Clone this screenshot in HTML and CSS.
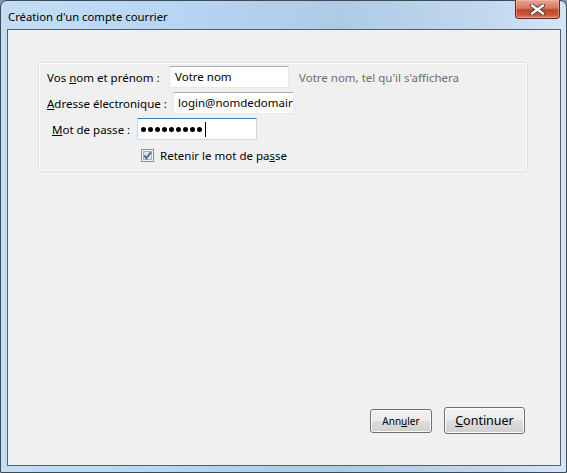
FILE: index.html
```html
<!DOCTYPE html>
<html lang="fr">
<head>
    <meta charset="UTF-8">
    <title>Création d'un compte courrier</title>
    <link rel="stylesheet" href="styles.css">
</head>
<body>
    <div class="window">
        <div class="titlebar">
            <span class="title">Création d'un compte courrier</span>
            <div class="close-btn">
                <svg width="17" height="11" viewBox="0 0 17 11">
                    <path d="M3 1.5 L14 9.5 M14 1.5 L3 9.5" stroke="#4a3a36" stroke-width="4.2" stroke-linecap="round"/>
                    <path d="M3 1.5 L14 9.5 M14 1.5 L3 9.5" stroke="#ffffff" stroke-width="2.4" stroke-linecap="round"/>
                </svg>
            </div>
        </div>

        <div class="client">
            <div class="groupbox">
                <div class="row">
                    <label class="lbl lbl-name">Vos <u>n</u>om et prénom :</label>
                    <div class="field">Votre nom</div>
                    <span class="hint">Votre nom, tel qu'il s'affichera</span>
                </div>
                <div class="row">
                    <label class="lbl lbl-mail"><u>A</u>dresse électronique :</label>
                    <div class="field field-mail">login@nomdedomair</div>
                </div>
                <div class="row">
                    <label class="lbl lbl-pass"><u>M</u>ot de passe :</label>
                    <div class="field field-pass">
                        <span class="dot"></span><span class="dot"></span><span class="dot"></span>
                        <span class="dot"></span><span class="dot"></span><span class="dot"></span>
                        <span class="dot"></span><span class="dot"></span><span class="dot"></span>
                        <span class="caret"></span>
                    </div>
                </div>
                <div class="row row-check">
                    <span class="checkbox">
                        <svg width="13" height="13" viewBox="0 0 13 13">
                            <rect x="0.5" y="0.5" width="12" height="12" fill="#f4f4f4" stroke="#8e8f8f"/>
                            <rect x="2.5" y="2.5" width="8" height="8" fill="#dfe3e8" stroke="#aab0b8"/>
                            <path d="M3.2 6.4 L5.4 9.2 L9.8 3.2" fill="none" stroke="#4d6185" stroke-width="1.8"/>
                        </svg>
                    </span>
                    <span class="check-lbl">Retenir le mot de pa<u>s</u>se</span>
                </div>
            </div>

            <div class="footer">
                <button class="btn btn-small">Ann<u>u</u>ler</button>
                <button class="btn btn-main"><u>C</u>ontinuer</button>
            </div>
        </div>
    </div>
</body>
</html>
```

FILE: styles.css
```css
html, body {
    margin: 0;
    padding: 0;
    background: #7d95ad;
}

body {
    font-family: "Noto Sans", "Open Sans", sans-serif;
    font-size: 11.5px;
    color: #000;
}

.window {
    box-sizing: border-box;
    width: 567px;
    height: 473px;
    border: 1px solid #3f4a57;
    border-radius: 7px 7px 2px 2px;
    padding: 0 5px 6px 6px;
    background: linear-gradient(90deg, #c4ddf5 0%, #b7d6f4 30%, #aecbe6 60%, #c1d7ee 85%, #d4e5f8 100%);
    display: flex;
    flex-direction: column;
}

.titlebar {
    height: 28px;
    display: flex;
    align-items: flex-start;
    justify-content: space-between;
}

.title {
    margin-top: 8px;
    margin-left: 1px;
    color: #000;
    font-size: 11.3px;
}

.close-btn {
    width: 45px;
    height: 19px;
    margin-top: -1px;
    margin-right: 1px;
    box-sizing: border-box;
    border: 1px solid #5b2a22;
    border-top: none;
    border-radius: 0 0 4px 4px;
    background: linear-gradient(180deg, #e8a593 0%, #d47a62 45%, #c1452b 55%, #cc5a3e 85%, #e08a6c 100%);
    box-shadow: inset 0 0 0 1px rgba(255, 200, 180, 0.45);
    display: flex;
    align-items: center;
    justify-content: center;
}

.client {
    flex: 1;
    border: 1px solid #55606d;
    background: #f0f0f0;
    padding: 32px 35px 31px 30px;
    display: flex;
    flex-direction: column;
}

.groupbox {
    box-sizing: border-box;
    width: 490px;
    height: 110px;
    border: 1px solid #d9e1e6;
    border-radius: 3px;
    box-shadow: inset 0 0 0 1px #ffffff;
    padding-top: 3px;
}

.row {
    height: 22px;
    margin-bottom: 4px;
    display: flex;
    align-items: center;
}

.lbl {
    box-sizing: border-box;
    white-space: nowrap;
}

.lbl-name { margin-left: 8px; width: 122px; }
.lbl-mail { margin-left: 8px; width: 126px; }
.lbl-pass { margin-left: 13px; width: 85px; }

.field {
    box-sizing: border-box;
    width: 120px;
    height: 22px;
    border: 1px solid #e3e9ef;
    border-top-color: #abadb3;
    background: #fff;
    padding: 0 5px;
    line-height: 20px;
    overflow: hidden;
    white-space: nowrap;
}

.field-mail {
    width: 121px;
    padding-left: 4px;
}

.field-pass {
    border-color: #c5daed;
    border-top-color: #3d7bad;
    display: flex;
    align-items: center;
    gap: 2px;
    padding-left: 3px;
}

.dot {
    width: 5px;
    height: 5px;
    border-radius: 50%;
    background: #000;
}

.caret {
    width: 1px;
    height: 15px;
    margin-left: 1px;
    background: #000;
}

.hint {
    margin-left: 10px;
    color: #6d6d6d;
    white-space: nowrap;
}

.row-check {
    margin-top: 4px;
}

.checkbox {
    margin-left: 102px;
    width: 13px;
    height: 13px;
    display: flex;
}

.check-lbl {
    margin-left: 6px;
}

.footer {
    margin-top: auto;
    display: flex;
    justify-content: flex-end;
    align-items: center;
    gap: 12px;
}

.btn {
    box-sizing: border-box;
    border: 1px solid #707070;
    border-radius: 3px;
    background: linear-gradient(180deg, #f2f2f2 0%, #ebebeb 48%, #dddddd 52%, #cfcfcf 100%);
    box-shadow: inset 0 0 0 1px #fcfcfc;
    font-family: "Noto Sans", sans-serif;
    color: #000;
    padding: 0;
}

.btn-small {
    width: 62px;
    height: 24px;
    font-size: 10px;
}

.btn-main {
    width: 81px;
    height: 27px;
    font-size: 12.5px;
}
```
